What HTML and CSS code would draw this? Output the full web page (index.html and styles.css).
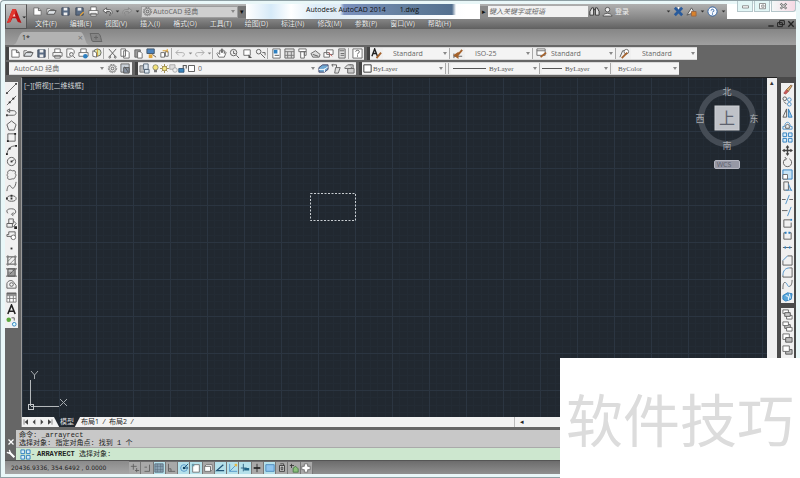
FILE: index.html
```html
<!DOCTYPE html>
<html lang="zh-CN">
<head>
    <meta charset="UTF-8">
    <title>Autodesk AutoCAD 2014 - 1.dwg</title>
    <link rel="stylesheet" href="styles.css">
</head>
<body>

<div class="app">
    <header class="header">
        <button class="app-button" aria-label="应用程序菜单">
            <svg viewBox="0 0 22 23">
                <path d="M1 18L7 3h4l6 15-4-1-2-4H7l-2 4z" fill="#b91517"/>
                <path d="M7 3h4l-1 6-4 4-1 4-4 1z" fill="#e2382f"/>
                <path d="M9 8l1.500 3h-3z" fill="#fbd5d0"/>
                <path d="M18 11h4l-2 2z" fill="#222"/>
            </svg>
        </button>
        <div class="titlebar">
            <div class="quick">
                <div class="icons" data-icons="new open save saveas print undoL caret redoL caret"></div>
                <div class="combo workspace">
                    <svg data-icon="gear"></svg>
                    <select aria-label="工作空间"><option>AutoCAD 经典</option></select>
                </div>
                <button class="quick-more" aria-label="自定义">▾</button>
            </div>
            <div class="title"><span>Autodesk AutoCAD 2014</span><span>1.dwg</span></div>
            <div class="infocenter">
                <button class="info-toggle" aria-label="收拢">▸</button>
                <input class="search" type="text" placeholder="键入关键字或短语" aria-label="搜索">
                <div class="icons" data-icons="find user"></div>
                <button class="login">登录</button>
                <div class="icons info-end" data-icons="caret exchange a360 caret help caret"></div>
            </div>
            <div class="window-buttons">
                <button aria-label="最小化"><svg data-icon="winmin"></svg></button>
                <button aria-label="还原"><svg data-icon="winmax"></svg></button>
                <button class="close" aria-label="关闭"><svg data-icon="winclose"></svg></button>
            </div>
        </div>
        <nav class="menu">
            <button>文件(F)</button>
            <button>编辑(E)</button>
            <button>视图(V)</button>
            <button>插入(I)</button>
            <button>格式(O)</button>
            <button>工具(T)</button>
            <button>绘图(D)</button>
            <button>标注(N)</button>
            <button>修改(M)</button>
            <button>参数(P)</button>
            <button>窗口(W)</button>
            <button>帮助(H)</button>
            <div class="icons doc-buttons" data-icons="docmin docmax docclose"></div>
        </nav>
    </header>

    <div class="file-tabs">
        <div class="file-tab">
            <svg class="tab-shape" viewBox="0 0 76 13" preserveAspectRatio="none"><path d="M0 13C5 13 5 1 11 1h56c5 0 5 12 9 12z" fill="#b2b2b2"/></svg>
            <button class="tab-name">1*</button>
            <button class="tab-close" aria-label="关闭图形">×</button>
        </div>
        <button class="tab-add" aria-label="新图形"><svg viewBox="0 0 14 10"><path d="M1 1h8c3 0 3 8 4 8H4C2 9 2 2 1 1z" fill="#858585" stroke="#666"/><path d="M5 5h4M7 3v4" stroke="#666"/></svg></button>
    </div>

    <div class="toolbars">
        <div class="toolbar-row">
            <div class="bar">
                <div class="icons" data-icons="new open save sep print preview publish dwf sep cut copy paste match block sep undo caretG redo caretG sep pan zoomrt zoomwin zoomprev sep props center palette sheet markup calc sep helpbox"></div>
            </div>
            <div class="bar">
                <div class="icons" data-icons="textstyle"></div>
                <select class="w-textstyle" aria-label="文字样式"><option>Standard</option></select>
                <div class="icons" data-icons="sep dimstyle"></div>
                <select class="w-dimstyle" aria-label="标注样式"><option>ISO-25</option></select>
                <div class="icons" data-icons="sep tablestyle"></div>
                <select class="w-tablestyle" aria-label="表格样式"><option>Standard</option></select>
                <div class="icons" data-icons="sep leaderstyle"></div>
                <select class="w-leader" aria-label="多重引线样式"><option>Standard</option></select>
            </div>
        </div>
        <div class="toolbar-row">
            <div class="bar">
                <select class="w-space" aria-label="工作空间"><option>AutoCAD 经典</option></select>
                <div class="icons" data-icons="gear wssave"></div>
            </div>
            <div class="bar">
                <div class="icons" data-icons="layers"></div>
                <div class="combo w-layer">
                    <div class="icons small" data-icons="bulb sun freeze unlock square"></div>
                    <select aria-label="图层"><option>0</option></select>
                </div>
                <div class="icons" data-icons="layerset layerprev layerstate"></div>
            </div>
            <div class="bar serif">
                <div class="combo w-color">
                    <svg data-icon="square"></svg>
                    <select aria-label="颜色"><option>ByLayer</option></select>
                </div>
                <div class="icons" data-icons="sep sep"></div>
                <div class="combo w-linetype">
                    <span class="sample"></span>
                    <select aria-label="线型"><option>ByLayer</option></select>
                </div>
                <div class="icons" data-icons="sep"></div>
                <div class="combo w-weight">
                    <span class="sample short"></span>
                    <select aria-label="线宽"><option>ByLayer</option></select>
                </div>
                <div class="icons" data-icons="sep"></div>
                <select class="w-plot" aria-label="打印样式"><option>ByColor</option></select>
            </div>
        </div>
    </div>

    <main class="work">
        <div class="dock draw" data-icons="line xline pline polygon rect arc circle revcloud spline ellipse ellarc insert makeblock point hatch gradient region table mtext addsel"></div>
        <section class="drawing">
            <div class="canvas">
                <span class="view-label">[−][俯视][二维线框]</span>
                <svg class="selection" viewBox="0 0 46 28"><rect x=".5" y=".5" width="45" height="27" fill="none" stroke="#c9ced2" stroke-dasharray="2 1.500"/></svg>
                <div class="viewcube">
                    <svg viewBox="0 0 66 66">
                        <circle cx="33" cy="33" r="26" fill="none" stroke="#454c55" stroke-width="6"/>
                        <rect x="21" y="21" width="24" height="24" fill="#bfc2c8" stroke="#cfd1d6"/>
                        <text x="33" y="39" font-size="16" fill="#5d626e">上</text>
                        <text x="33" y="10" font-size="9" fill="#a8acb0">北</text>
                        <text x="33" y="64" font-size="9" fill="#a8acb0">南</text>
                        <text x="6" y="37" font-size="9" fill="#a8acb0">西</text>
                        <text x="60" y="37" font-size="9" fill="#a8acb0">东</text>
                    </svg>
                    <button class="wcs">WCS</button>
                </div>
                <svg class="ucs" viewBox="0 0 46 46">
                    <path d="M8.500 38V12M9 38.500h28" stroke="#b4b8bb" fill="none"/>
                    <rect x="6.500" y="36.500" width="5" height="5" stroke="#c4c8cb" fill="none"/>
                    <path d="M9 3l3.500 4L16 3M12.500 7v4M38 31l7 7M45 31l-7 7" stroke="#a4a9ad" fill="none"/>
                </svg>
            </div>
            <div class="vscroll"><span>▴</span></div>
            <div class="layout-tabs">
                <div class="icons" data-icons="first prev next last"></div>
                <button class="layout active">模型</button>
                <button class="layout">布局1</button><i>/</i>
                <button class="layout">布局2</button><i>/</i>
                <span class="hscroll">◂</span>
            </div>
        </section>
        <div class="modify">
            <div class="dock" data-icons="erase copyobj mirror offset array move rotate scale stretch trim extend breakpt break join chamfer fillet blend explode"></div>
            <div class="dock order" data-icons="front back above under front back above"></div>
        </div>
    </main>

    <div class="command">
        <div class="command-side">
            <button aria-label="关闭"><svg data-icon="cross"></svg></button>
            <button aria-label="自定义"><svg data-icon="wrench"></svg></button>
        </div>
        <div class="command-body">
            <div class="history">
                <p>命令: _arrayrect</p>
                <p>选择对象: 指定对角点: 找到 1 个</p>
            </div>
            <div class="prompt">
                <svg data-icon="array"></svg><span class="dash">-</span>
                <label for="cmd"><b>ARRAYRECT</b> 选择对象:</label>
                <input id="cmd" type="text">
            </div>
        </div>
    </div>

    <footer class="status">
        <span class="coords">20436.9336, 354.6492 , 0.0000</span>
        <div class="toggles" data-icons="infer snap grid* ortho polar* osnap* osnap3d track* ducs* dyn* lwt tpy* qp sc am"></div>
    </footer>
</div>

<div class="watermark">软件技巧</div>

<script src="script.js"></script>
</body>
</html>
```

FILE: styles.css
```css
* {
    box-sizing: border-box;
}
body {
    margin: 0;
    height: 100vh;
    overflow: hidden;
    position: relative;
    font-family: "Open Sans", "Noto Sans CJK SC", sans-serif;
    font-size: 7px;
    line-height: 10px;
    color: #555;
}
button, input, select {
    font: inherit;
    color: inherit;
    background: none;
    border: none;
    border-radius: 0;
    padding: 0;
    margin: 0;
    outline: none;
}
svg {
    display: block;
    flex: none;
    width: 11px;
    height: 11px;
}
.app {
    height: 100vh;
    display: flex;
    flex-direction: column;
    background: #e9f7f8;
    border: 1px solid #8fa0a5;
    border-right: none;
    padding: 3px 4px 3px 4px;
    border-radius: 4px 4px 0 0;
}

/* title bar and menu */
.header {
    display: grid;
    grid-template-columns: 22px 1fr;
    grid-template-rows: 15px 10px;
    background: #fff;
}
.app-button {
    grid-row: 1 / 3;
    background: linear-gradient(#c4c4c4, #8c8c8c);
    border: 1px solid #555;
    border-top-color: #999;
}
.app-button svg {
    width: 20px;
    height: 22px;
}
.titlebar {
    display: flex;
    min-width: 0;
}
.quick {
    display: flex;
    align-items: center;
    width: 219px;
    padding-left: 3px;
    background: linear-gradient(#b5b5b5, #868686);
}
.quick .tool {
    width: 14px;
}
.infocenter .tool {
    width: 13px;
}
.quick .tool.caret {
    width: 6px;
}
.combo {
    display: flex;
    align-items: center;
    background: #f4f4f4;
}
.combo select {
    flex: 1;
    min-width: 0;
    background-color: transparent;
}
select {
    appearance: none;
    height: 11px;
    line-height: 10px;
    color: #666;
    background: #f4f4f4 url("data:image/svg+xml,%3Csvg xmlns='http://www.w3.org/2000/svg' viewBox='0 0 4 3'%3E%3Cpath d='M0 0h4L2 3z' fill='%23888'/%3E%3C/svg%3E") no-repeat right 2px center / 4px 3px;
}
.combo.workspace {
    flex: 1;
    margin-left: 1px;
    height: 12px;
    background: #cfcfcf;
    border: 1px solid #9d9d9d;
}
.quick-more {
    width: 8px;
    height: 12px;
    background: #777;
    color: #111;
}
.title {
    flex: 1;
    display: flex;
    gap: 14px;
    padding-left: 60px;
    line-height: 11px;
    color: #111;
    white-space: pre;
    background:
        linear-gradient(to right, transparent 94px, #7b90bd 98px, #64809f 155px, #54708f 206px, transparent 210px) 0 0 / 100% 11px no-repeat,
        linear-gradient(to right, #fff, #d6eaf8 25px, #fff 45px, #dcecf7 70px, #e2edf6 95px, #fff 220px);
}
.infocenter {
    display: flex;
    align-items: center;
    width: 247px;
    background: linear-gradient(#b0b0b0, #858585);
}
.info-toggle {
    width: 8px;
    height: 12px;
    color: #111;
    background: #8a8a8a;
}
.search {
    width: 100px;
    height: 11px;
    padding-left: 1px;
    background: #f2f2f2;
    font-style: italic;
}
.search::placeholder {
    color: #666;
}
.login {
    color: #eee;
    margin-left: 1px;
}
.info-end {
    margin-left: auto;
}
.infocenter .tool.caret {
    width: 8px;
}
.window-buttons {
    display: flex;
    gap: 1px;
    margin: -3px 0 7px 10px;
}
.window-buttons button {
    width: 16px;
    display: flex;
    justify-content: center;
    align-items: center;
    border: 1px solid #b5c6ca;
    border-top: none;
    background: #e3f6f6;
}
.window-buttons .close {
    width: 25px;
    background: linear-gradient(to right, #f4f8f8, #f6d9e4);
    border-radius: 0 0 3px 0;
}
.window-buttons svg {
    width: 9px;
    height: 9px;
}
.menu {
    display: flex;
    gap: 13px;
    padding-left: 8px;
    color: #f2f2f2;
    background: linear-gradient(#858585, #606060);
}
.menu > button {
    text-shadow: 0 0 1px #333;
    white-space: nowrap;
}
.doc-buttons {
    margin-left: auto;
}
.doc-buttons .tool {
    width: 10px;
}
.doc-buttons svg {
    width: 8px;
    height: 8px;
}

/* drawing tabs */
.file-tabs {
    display: flex;
    align-items: flex-end;
    height: 16px;
    padding-left: 8px;
    background: linear-gradient(#868686, #a0a0a0);
}
.file-tab {
    position: relative;
    display: flex;
    align-items: center;
    justify-content: space-between;
    width: 76px;
    height: 14px;
    padding: 0 6px 0 9px;
    color: #222;
}
.tab-shape {
    position: absolute;
    inset: 0;
    width: 100%;
    height: 100%;
}
.tab-name, .tab-close {
    position: relative;
}
.tab-close {
    color: #777;
    font-size: 9px;
}
.tab-add svg {
    width: 14px;
    height: 11px;
    margin-bottom: 2px;
}

/* toolbars */
.toolbars {
    display: flex;
    flex-direction: column;
    gap: 2px;
    padding: 2px 4px;
    background: #666;
}
.toolbar-row {
    display: flex;
    gap: 6px;
}
.bar {
    display: flex;
    align-items: center;
    height: 13px;
    background: #f0f0f0;
    border: 1px solid #d8d8d8;
    border-width: 1px 0;
    box-shadow: -3px 0 0 #444;
}
.icons {
    display: flex;
    align-items: center;
}
.tool {
    display: flex;
    align-items: center;
    justify-content: center;
    width: 13px;
    height: 11px;
    overflow: hidden;
}
.tool.caret {
    width: 6px;
}
.icons.small .tool {
    width: 9px;
}
.icons.small svg {
    width: 9px;
    height: 9px;
}
.sep {
    width: 3px;
    height: 11px;
    border-left: 1px solid #aaa;
}
.w-textstyle { width: 66px; padding-left: 10px; }
.w-dimstyle { width: 67px; padding-left: 10px; }
.w-tablestyle { width: 67px; padding-left: 3px; }
.w-leader { width: 66px; padding-left: 11px; }
.w-space { width: 97px; padding-left: 5px; }
.w-layer { width: 166px; }
.w-layer select { padding-left: 2px; }
.w-color { width: 83px; }
.w-linetype { width: 88px; padding-left: 2px; }
.w-weight { width: 68px; }
.w-plot { width: 66px; padding-left: 5px; }
.serif, .serif select {
    font-family: "Liberation Serif", serif;
    color: #555;
}
.sample {
    width: 33px;
    height: 1px;
    margin-right: 3px;
    background: #555;
}
.sample.short {
    width: 20px;
}

/* work area */
.work {
    flex: 1;
    min-height: 0;
    display: flex;
    background: #666;
    padding-bottom: 3px;
    overflow: hidden;
}
.dock {
    display: grid;
    grid-auto-rows: 1fr;
    background: #f0f0f0;
    width: 13px;
}
.dock .tool {
    height: auto;
}
.draw {
    height: 246px;
    margin-top: 5px;
    flex: none;
}
.drawing {
    flex: 1;
    display: grid;
    grid-template-columns: 1fr 10px;
    grid-template-rows: 1fr 10px;
    margin-left: 3px;
    border-top: 1px solid #222;
    border-left: 1px solid #999;
}
.canvas {
    position: relative;
    overflow: hidden;
    background-color: #212830;
    background-image:
        linear-gradient(to right, #2b3541 1px, transparent 1px),
        linear-gradient(#2b3541 1px, transparent 1px),
        linear-gradient(to right, transparent 7px, #232b34 7px 8px, transparent 8px 15px, #232b34 15px 16px, transparent 16px 22px, #232b34 22px 23px, transparent 23px 30px, #232b34 30px 31px, transparent 31px),
        linear-gradient(transparent 7px, #232b34 7px 8px, transparent 8px 15px, #232b34 15px 16px, transparent 16px 22px, #232b34 22px 23px, transparent 23px 30px, #232b34 30px 31px, transparent 31px);
    background-size: 37px 37px;
    background-position: 0 16px;
}
.view-label {
    position: absolute;
    left: 2px;
    top: 3px;
    color: #d5d8da;
}
.selection {
    position: absolute;
    left: 288px;
    top: 115px;
    width: 46px;
    height: 28px;
}
.viewcube {
    position: absolute;
    right: 7px;
    top: 7px;
    display: flex;
    flex-direction: column;
    align-items: center;
    gap: 9px;
}
.viewcube svg {
    width: 66px;
    height: 66px;
}
.viewcube text {
    text-anchor: middle;
}
.wcs {
    width: 26px;
    height: 9px;
    padding-right: 6px;
    line-height: 7px;
    border: 1px solid #b5b7c2;
    border-radius: 2px;
    background: #9698a5;
    color: #5c5f6c;
}
.ucs {
    position: absolute;
    left: 0;
    bottom: 3px;
    width: 46px;
    height: 46px;
}
.vscroll {
    background: #efefef;
    text-align: center;
    color: #333;
}
.layout-tabs {
    grid-column: 1 / 3;
    display: flex;
    align-items: center;
    background: #f2f2f2;
    color: #222;
}
.layout-tabs .tool {
    width: 8px;
}
.layout-tabs svg {
    width: 8px;
    height: 8px;
}
.layout-tabs i {
    width: 8px;
    text-align: center;
}
.layout {
    padding: 0 1px;
}
.layout.active {
    width: 26px;
    height: 10px;
    color: #ddd;
    background: #212830;
    clip-path: polygon(0 0, 100% 0, 80% 100%, 20% 100%);
}
.hscroll {
    margin-left: 378px;
    padding-left: 5px;
    border-left: 1px solid #bbb;
}
.modify {
    width: 19px;
    padding: 6px 2px 0 4px;
    background: #4a4a4a;
    overflow: hidden;
}
.modify .dock {
    height: 220px;
}
.modify .order {
    height: 86px;
    margin-top: 5px;
}

/* command line */
.command {
    display: flex;
    height: 31px;
    font-family: "Liberation Mono", "Noto Sans CJK SC", monospace;
    color: #222;
    background: #c8c8c8;
    border-bottom: 1px solid #555;
}
.command-side {
    width: 11px;
    display: flex;
    flex-direction: column;
    justify-content: flex-end;
    align-items: center;
    gap: 2px;
    padding-bottom: 1px;
    background: #666;
}
.command-side svg {
    width: 10px;
    height: 10px;
}
.command-body {
    flex: 1;
}
.history {
    height: 18px;
    padding: 1px 0 0 3px;
    border-bottom: 1px solid #aaa;
}
.history p {
    margin: 0;
    line-height: 8px;
}
.prompt {
    display: flex;
    align-items: center;
    height: 12px;
    padding-left: 4px;
    background: #cde7cf;
}
.dash {
    width: 6px;
}
.prompt input {
    flex: 1;
}

/* status bar */
.status {
    display: flex;
    align-items: center;
    height: 13px;
    background: linear-gradient(#6c6c6c, #8f8f8f);
}
.coords {
    width: 124px;
    height: 13px;
    line-height: 13px;
    padding-left: 6px;
    font-family: "DejaVu Sans", sans-serif;
    font-size: 6px;
    color: #222;
    background: linear-gradient(#8a8a8a, #a6a6a6);
}
.toggles {
    display: grid;
    grid-template-columns: repeat(15, 1fr);
    width: 184px;
}
.toggles .tool {
    width: auto;
    height: 12px;
    background: #a8a8a8;
    border-right: 1px solid #777;
}
.toggles .tool.on {
    background: #b5e0ea;
}
.toggles svg {
    width: 10px;
    height: 10px;
}

.watermark {
    position: absolute;
    right: 0;
    bottom: 0;
    width: 240px;
    height: 120px;
    line-height: 118px;
    font-family: "Noto Sans CJK SC", sans-serif;
    font-size: 57px;
    text-align: center;
    white-space: nowrap;
    color: #dcdcdc;
    background: #fff;
}
```

FILE: script.js
```js
// Icon bodies, drawn on a 12 x 12 box
const K = 'fill="none" stroke="#5c5c5c"';
const B = 'fill="none" stroke="#4a8fc6"';
const W = 'fill="#fff" stroke="#6a6a6a"';

const icons = {
    new: `<path d="M2 2h5l3 3v5H2z" ${W}/><path d="M7 2v3h3" ${K}/>`,
    open: `<path d="M1 9V3h3l1 1h4v2" ${W}/><path d="M1 9l2-4h8l-2 4z" fill="#dfe4e8" stroke="#555"/>`,
    save: `<path d="M2 2h8v8H2z" fill="#5b6d85" stroke="#3f4a5a"/><path d="M4 2h4v3H4zM4 7h4v3H4z" fill="#eee"/>`,
    saveas: `<path d="M2 2h8v8H2z" fill="#5b6d85" stroke="#3f4a5a"/><path d="M4 2h4v3H4z" fill="#eee"/><path d="M6 10l4-4 1 1-4 4z" fill="#e7a33a"/>`,
    print: `<path d="M3 5V1h6v4M1 5h10v4H1zM3 8h6v3H3z" ${W}/>`,
    preview: `<path d="M2 1h6l2 2v3M2 1v9h4" ${W}/><circle cx="7" cy="7" r="2" ${K}/><path d="M9 9l2 2" ${K}/>`,
    publish: `<path d="M3 5V1h6v4M1 5h10v4H1z" ${W}/><circle cx="8" cy="9" r="2.500" fill="#2d7fc0"/>`,
    dwf: `<circle cx="7" cy="5" r="4" fill="#d8e8b0" stroke="#666"/><path d="M2 3l4 2v5L2 9z" ${W}/><path d="M7 1v8" stroke="#d39a2d"/>`,
    cut: `<path d="M2 1l7 8M10 1L3 9" ${K}/><circle cx="3" cy="10" r="1" ${K}/><circle cx="9" cy="10" r="1" ${K}/>`,
    copy: `<path d="M1 1h5v8H1zM4 3h4l2 2v6H4z" ${W}/>`,
    paste: `<path d="M2 2h6v8H2z" fill="#999" stroke="#666"/><path d="M5 4h3l2 2v5H5z" ${W}/>`,
    match: `<path d="M1 1h8v5H1z" fill="#4c83bd" stroke="#456"/><path d="M3 7h4v4H3z" fill="#e0a63e"/><path d="M7 7l4 3" stroke="#654"/>`,
    block: `<path d="M2 5h4v5H2zM7 4h3v5H7z" ${W}/><path d="M4 3h5M9 1v4" stroke="#d79a27"/>`,
    undo: `<path d="M4 2L1 5l3 3M1 5h7c3 0 3 4 0 4" fill="none" stroke="#aaa"/>`,
    redo: `<path d="M8 2l3 3-3 3M11 5H4C1 5 1 9 4 9" fill="none" stroke="#aaa"/>`,
    undoL: `<path d="M5 2L1 5l4 3V6h3c2 0 2 3 0 4 4 0 4-6 0-6H5z" fill="#eee" stroke="#555"/>`,
    redoL: `<path d="M7 2l4 3-4 3V6H4C2 6 2 9 4 10 0 10 0 4 4 4h3z" fill="#aaa" stroke="#888"/>`,
    pan: `<path d="M3 10L1 6l1-1 2 2V3l1-1 1 3V1h1v4l1-3 1 1v3l1-2 1 1-2 5z" ${W}/>`,
    zoomrt: `<circle cx="5" cy="5" r="3.500" ${K}/><path d="M8 8l3 3M5 3v3h2" ${K}/>`,
    zoomwin: `<path d="M2 2h7v6H2z" ${W}/><path d="M7 7l4 4H7z" fill="#555"/>`,
    zoomprev: `<circle cx="4" cy="4" r="2.500" ${K}/><path d="M6 6l5 5M8 5h3v3" ${K}/>`,
    props: `<path d="M2 1h8v10H2z" ${W}/><path d="M3 2h4v4H3z" fill="#2d7fc0"/><path d="M4 8h5" stroke="#555"/>`,
    center: `<path d="M1 1h10v10H1z" fill="#ddd" stroke="#666"/><path d="M1 4h10M4 4v7M8 4v7M1 8h10" stroke="#777"/>`,
    palette: `<path d="M2 1h8v3H2zM4 4h4v7H4zM8 4h2v4H8z" ${W}/>`,
    sheet: `<path d="M1 6l5-3 5 4-1 3H3z" fill="#ddd" stroke="#666"/><path d="M3 7l6 2" stroke="#555"/>`,
    markup: `<path d="M1 5h6v5H1zM4 2h7v5H4z" ${W}/><path d="M6 5l4 4" stroke="#c55"/>`,
    calc: `<path d="M3 1h7v10H3z" fill="#ddd" stroke="#666"/><path d="M4 3h5M5 6h4M5 8h4" stroke="#666"/>`,
    helpbox: `<path d="M1 1h10v10H1z" ${W}/><path d="M4 4c0-2 4-2 4 0S6 5 6 7M6 8v1.500" ${K}/>`,
    textstyle: `<path d="M1 9l3-8 3 8M2 6h4" fill="none" stroke="#222" stroke-width="1.500"/><path d="M6 11l5-6" stroke="#a5622c" stroke-width="2"/>`,
    dimstyle: `<path d="M1 9h9M1 6v5" ${K}/><path d="M2 8l3-2v4zM5 8l5-6" fill="#444" stroke="#a5622c" stroke-width="2"/>`,
    tablestyle: `<path d="M1 1h9v7H1zM1 3h9" ${W}/><path d="M5 10l6-5" stroke="#a5622c" stroke-width="2"/>`,
    leaderstyle: `<path d="M1 10l3-7h4" ${K}/><circle cx="8" cy="4" r="2.500" ${W}/><path d="M3 11l6-6" stroke="#a5622c" stroke-width="2"/>`,
    gear: `<circle cx="6" cy="6" r="4.500" fill="none" stroke="#777" stroke-dasharray="2 1"/><circle cx="6" cy="6" r="3.500" ${K} stroke-width=".7"/><circle cx="6" cy="6" r="1.500" ${K}/>`,
    wssave: `<path d="M1 1h9v9H1z" fill="#c9d0d8" stroke="#666"/><path d="M4 5h6v6H4zM5 4l4 6" fill="#8893a2" stroke="#555"/>`,
    layers: `<path d="M1 3h5v7H1z" fill="#bbb" stroke="#777"/><path d="M5 1h5v6H5zM6 7h5v4H6z" fill="#dce6ef" stroke="#567"/>`,
    bulb: `<circle cx="6" cy="4.500" r="3.500" fill="#f3e27a" stroke="#776"/><path d="M4 8h4v3H4z" fill="#777"/>`,
    sun: `<path d="M6 0v12M0 6h12M2 2l8 8M10 2l-8 8" stroke="#8a7430"/><circle cx="6" cy="6" r="3" fill="#f5e98a" stroke="#8a7430"/>`,
    freeze: `<path d="M1 1h7v6H1z" fill="#ddd" stroke="#999"/><circle cx="8" cy="8" r="3" fill="#eee" stroke="#999"/>`,
    unlock: `<path d="M1 6h7v5H1z" fill="#3b86bd" stroke="#246"/><path d="M7 6V2h4v4" ${K} stroke-width="1.500"/>`,
    square: `<path d="M2 2h8v8H2z" fill="#fff" stroke="#333"/>`,
    layerset: `<path d="M1 5l4-3h6v5L7 10H1z" fill="#6fa8d3" stroke="#446"/><path d="M1 7h6l4-3M7 10V6" fill="none" stroke="#fff"/>`,
    layerprev: `<path d="M5 5h5L8 11H4z" fill="#ddd" stroke="#666"/><path d="M1 2h5v3M2 1L1 2l1 2" ${K}/>`,
    layerstate: `<path d="M1 5l3-3h4v4H1z" fill="#ddd" stroke="#666"/><path d="M4 6h7v5H4zM6 2h4v4" fill="#ccc" stroke="#666"/>`,
    caret: `<path d="M4 5h4L6 7z" fill="#333"/>`,
    caretG: `<path d="M4 5h4L6 7z" fill="#888"/>`,
    find: `<path d="M1 10V6l2-4h2v8zM7 10V2h2l2 4v4zM5 4h2" fill="#ddd" stroke="#333"/>`,
    user: `<circle cx="6" cy="4" r="2.500" fill="#eee" stroke="#555"/><path d="M1 11c1-4 9-4 10 0z" fill="#eee" stroke="#555"/>`,
    exchange: `<path d="M2 2l8 8M10 2l-8 8" stroke="#295b9c" stroke-width="3"/><path d="M5 1l1 3 1-3z" fill="#fff"/>`,
    a360: `<path d="M1 10l5-8 3 5z" fill="#eee" stroke="#555"/><path d="M6 6h5v5H6z" fill="#d9822b" stroke="#964"/>`,
    help: `<circle cx="6" cy="6" r="5" fill="#f5f9ff" stroke="#2d5f9f"/><path d="M4.500 5c0-2 3-2 3 0S6 5.500 6 7M6 8v1.500" fill="none" stroke="#2d5f9f"/>`,
    winmin: `<path d="M2 5h8v3H2z" fill="#fff" stroke="#777"/>`,
    winmax: `<path d="M2 2h8v7H2zM5 4h3v3H5z" fill="#fff" stroke="#777"/>`,
    winclose: `<path d="M2 2l8 7M10 2L2 9" stroke="#666" stroke-width="3"/><path d="M2 2l8 7M10 2L2 9" stroke="#fff"/>`,
    docmin: `<path d="M2 9h8" stroke="#222" stroke-width="2"/>`,
    docmax: `<path d="M4 1h7v6H4zM1 4h7v6H1z" fill="#777" stroke="#222" stroke-width="1.500"/>`,
    docclose: `<path d="M2 2l8 8M10 2l-8 8" stroke="#222" stroke-width="2"/>`,

    line: `<path d="M1 11L11 1" ${K}/><path d="M0 10h2v2H0zM10 0h2v2h-2z" fill="#444"/>`,
    xline: `<path d="M1 11L11 1" ${K}/><path d="M3 7h2v2H3zM7 3h2v2H7z" fill="#222"/>`,
    pline: `<path d="M1 9h7c4 0 4-5 0-5H4M4 2v4L1 4z" ${K}/><path d="M0 8h2v2H0z" fill="#444"/>`,
    polygon: `<path d="M6 1l5 4-2 6H3L1 5z" ${K}/>`,
    rect: `<path d="M2 2h8v8H2z" ${K}/><path d="M1 9h2v2H1zM9 1h2v2H9z" fill="#222"/>`,
    arc: `<path d="M1 11C2 5 5 2 11 2" ${K}/><path d="M0 10h2v2H0zM3 4h2v2H3zM10 1h2v2h-2z" fill="#222"/>`,
    circle: `<circle cx="6" cy="6" r="4.500" ${K}/><path d="M6 6l3-2" ${K}/><path d="M5 5h2v2H5z" fill="#333"/>`,
    revcloud: `<path d="M3 2c2-2 3 0 4 0 3-1 4 1 3 3 2 2 0 3 0 4-1 3-3 1-4 2-3 1-5 0-4-3-2-2 0-2 0-3 0-1-1-2 1-3z" ${K}/>`,
    spline: `<path d="M1 11c1-9 4-6 5-4s4 1 5-6" ${K}/>`,
    ellipse: `<ellipse cx="6" cy="6" rx="5" ry="3" ${K}/><path d="M5 5h2v2H5zM0 5h2v2H0zM5 2h2v2H5z" fill="#333"/>`,
    ellarc: `<path d="M2 8C-1 4 3 3 6 3c6 0 6 6 1 6M8 7L6 9l2 2" ${K}/>`,
    insert: `<path d="M3 1h5v5H3zM1 6h6v4H1z" ${K}/><path d="M8 3l3 3-3 4" ${K}/><path d="M9 9h3v3H9z" fill="#222"/>`,
    makeblock: `<path d="M3 2h7v5H1V5h2z" ${K}/><circle cx="8" cy="8" r="2.500" ${W}/>`,
    point: `<path d="M5 5h2v2H5z" fill="#333"/>`,
    hatch: `<path d="M2 2h8v8H2zM0 2h12M0 10h12M2 0v12M10 0v12M2 7l5-5M4 10l6-6" ${K} stroke-width=".7"/>`,
    gradient: `<path d="M2 2h8v8H2z" fill="#999" stroke="#555"/><path d="M0 2h12M0 10h12M4 8l5-5" ${K}/><path d="M3 3h4v2H3z" fill="#ccc"/>`,
    region: `<path d="M1 10V5c1-4 6-4 7-2l3 4v3z" ${K}/><circle cx="6" cy="6" r="2" ${K}/>`,
    table: `<path d="M1 1h10v10H1zM1 4h10M1 7h10M4 4v7M8 4v7" fill="#fff" stroke="#777"/><path d="M1 1h10v2H1z" fill="#666"/>`,
    mtext: `<path d="M2 11L6 1l4 10M3 8h6" fill="none" stroke="#222" stroke-width="1.700"/>`,
    addsel: `<circle cx="3" cy="4" r="2.500" fill="#5aa83c"/><path d="M6 2h3v3" ${K}/><circle cx="9" cy="9" r="2" fill="#dff" stroke="#2d7fc0"/>`,

    erase: `<path d="M2 10l3-4 2 2-3 3z" fill="#c55" stroke="#a55"/><path d="M5 6l5-5 1 1-4 6z" fill="#e0b070" stroke="#864"/>`,
    copyobj: `<circle cx="3" cy="3" r="2" ${K}/><circle cx="8" cy="4" r="2" ${B}/><circle cx="8" cy="9" r="2" ${B}/><path d="M2 6l3 3" ${K}/>`,
    mirror: `<path d="M5 1v9H1z" ${K}/><path d="M7 1v9h4z" fill="#9cc8e8" stroke="#2d7fc0"/>`,
    offset: `<path d="M1 10V7h2c0-6 6-6 6 0h2v3z" ${B}/><path d="M4 9V7c0-3 4-3 4 0v2z" ${K}/>`,
    array: `<path d="M1 1h4v4H1zM7 1h4v4H7zM1 7h4v4H1zM7 7h4v4H7z" fill="#d8ecf9" stroke="#2d7fc0"/>`,
    move: `<path d="M6 1v10M1 6h10" stroke="#444" stroke-width="1.500"/><path d="M4 3l2-3 2 3zM4 9l2 3 2-3zM3 4L0 6l3 2zM9 4l3 2-3 2z" fill="#444"/>`,
    rotate: `<path d="M4 2a4.500 4.500 0 1 0 4 0M3 0l2 2-2 2" ${K}/>`,
    scale: `<path d="M1 1h10v10H1z" fill="#c8e4f5" stroke="#2d7fc0"/><path d="M1 6h5v5H1z" ${W}/>`,
    stretch: `<path d="M2 1h5v9H2z" ${K}/><path d="M7 3l3 7H4M8 7l3 4" ${B}/>`,
    trim: `<path d="M0 6h4M8 6h4" ${K}/><path d="M4 11L8 1" ${B}/>`,
    extend: `<path d="M0 5h6" ${K}/><path d="M6 11l4-10" ${B}/>`,
    breakpt: `<path d="M9 2H2v8h8V5" ${K}/><path d="M9 1h2v2H9z" fill="#2d7fc0"/>`,
    break: `<path d="M4 3H2v7h8V3H8" ${K}/><path d="M3 2h2v2H3zM7 2h2v2H7z" fill="#2d7fc0"/>`,
    join: `<path d="M1 6h10" ${K}/><path d="M3 4l2 2-2 2zM9 4L7 6l2 2z" fill="#2d7fc0"/>`,
    chamfer: `<path d="M1 6v5h10V1H6" ${K}/><path d="M1 6l5-5" ${B}/>`,
    fillet: `<path d="M1 9v2h10V1H8" ${K}/><path d="M1 9c0-5 3-8 7-8" ${B}/>`,
    blend: `<path d="M1 11c0-6 1-8 3-7" ${K}/><path d="M4 4c2 1 2 5 4 4" ${B}/><path d="M8 8c2 0 3-3 3-7" ${K}/>`,
    explode: `<path d="M1 5l5-3 5 1-1 6-6 2-3-2z" fill="#5aa7da" stroke="#2d7fc0"/><path d="M4 5l3 1v4M8 3l1 5" fill="none" stroke="#fff"/>`,
    front: `<path d="M1 1h6v4H1zM5 7h6v4H5z" ${W}/><path d="M3 4h6v4H3z" fill="#ccc" stroke="#555"/>`,
    back: `<path d="M3 4h6v4H3z" fill="#ccc" stroke="#555"/><path d="M1 1h6v4H1zM5 7h6v4H5z" ${W}/>`,
    above: `<path d="M1 1h7v6H1z" ${W}/><path d="M4 5h7v5H4z" fill="#bbb" stroke="#555"/>`,
    under: `<path d="M4 5h7v5H4z" fill="#bbb" stroke="#555"/><path d="M1 1h7v6H1z" ${W}/>`,

    first: `<path d="M3 2v8" ${K}/><path d="M9 2v8L4 6z" fill="#444"/>`,
    prev: `<path d="M8 2v8L4 6z" fill="#444"/>`,
    next: `<path d="M4 2v8l4-4z" fill="#444"/>`,
    last: `<path d="M9 2v8" ${K}/><path d="M3 2v8l5-4z" fill="#444"/>`,
    cross: `<path d="M3 3l6 6M9 3L3 9" stroke="#fff" stroke-width="1.500"/>`,
    wrench: `<path d="M4 4l6 6" stroke="#fff" stroke-width="2.500"/><path d="M1 4l3 1 1-1-1-3" fill="none" stroke="#fff" stroke-width="1.500"/>`,

    infer: `<path d="M4 1v7M1 4h7M8 6v5M6 9h5" ${K}/>`,
    snap: `<path d="M9 2v8H3M3 5h3" ${K}/>`,
    grid: `<path d="M1 1h10v10H1z" fill="#8ba4b5" stroke="#567"/><path d="M1 4h10M4 1v10M8 1v10M1 8h10" stroke="#567" stroke-width=".6"/>`,
    ortho: `<path d="M3 1v9h8M3 7h3v3" ${K}/>`,
    polar: `<circle cx="6" cy="6" r="4" ${B}/><path d="M6 6l5-5M6 6h5" stroke="#146"/><circle cx="6" cy="6" r="1.500" fill="#146"/>`,
    osnap: `<path d="M2 2h8v9H2z" ${W}/><path d="M1 1h3v3H1z" fill="#69a"/>`,
    osnap3d: `<path d="M2 4l2-2h7v6l-2 2H2z" ${W}/><path d="M2 4h7v6" ${K}/>`,
    track: `<path d="M10 2L2 9h9" fill="none" stroke="#257" stroke-width="1.500"/>`,
    ducs: `<path d="M2 1v9h9M2 10l7-7" ${B}/><path d="M8 1h3v3H8z" fill="#e6b643"/>`,
    dyn: `<path d="M4 1v9M1 6h7" stroke="#257"/><path d="M5 6h6v3H5z" fill="#268"/>`,
    lwt: `<path d="M6 1v10" stroke="#222"/><path d="M2 6h8" stroke="#222" stroke-width="2"/>`,
    tpy: `<path d="M1 2h10v8H1z" fill="#8fc4ee" stroke="#4484b8"/>`,
    qp: `<path d="M3 3h6v7H3zM4 1h4v2M5 5h2v3H5z" fill="#ccc" stroke="#333"/>`,
    sc: `<path d="M1 3h5M3 1v5" stroke="#333"/><path d="M5 6l3-2 3 3v4H5z" fill="#8bc07a" stroke="#474"/>`,
    am: `<path d="M4 1h4v3h3v4H8v3H4V8H1V4h3z" fill="#fff" stroke="#666"/>`
};

document.querySelectorAll('svg[data-icon]').forEach(svg => {
    svg.setAttribute('viewBox', '0 0 12 12');
    svg.innerHTML = icons[svg.dataset.icon];
});

// Fill each toolbar; a trailing * marks a toggle that is switched on
document.querySelectorAll('[data-icons]').forEach(bar => {
    bar.innerHTML = bar.dataset.icons.split(' ').map(item => {
        const name = item.replace('*', '');
        if (name === 'sep') return '<span class="sep"></span>';
        let cls = 'tool';
        if (name.startsWith('caret')) cls += ' caret';
        if (item.endsWith('*')) cls += ' on';
        return `<button class="${cls}" aria-label="${name}"><svg viewBox="0 0 12 12">${icons[name]}</svg></button>`;
    }).join('');
});
```
